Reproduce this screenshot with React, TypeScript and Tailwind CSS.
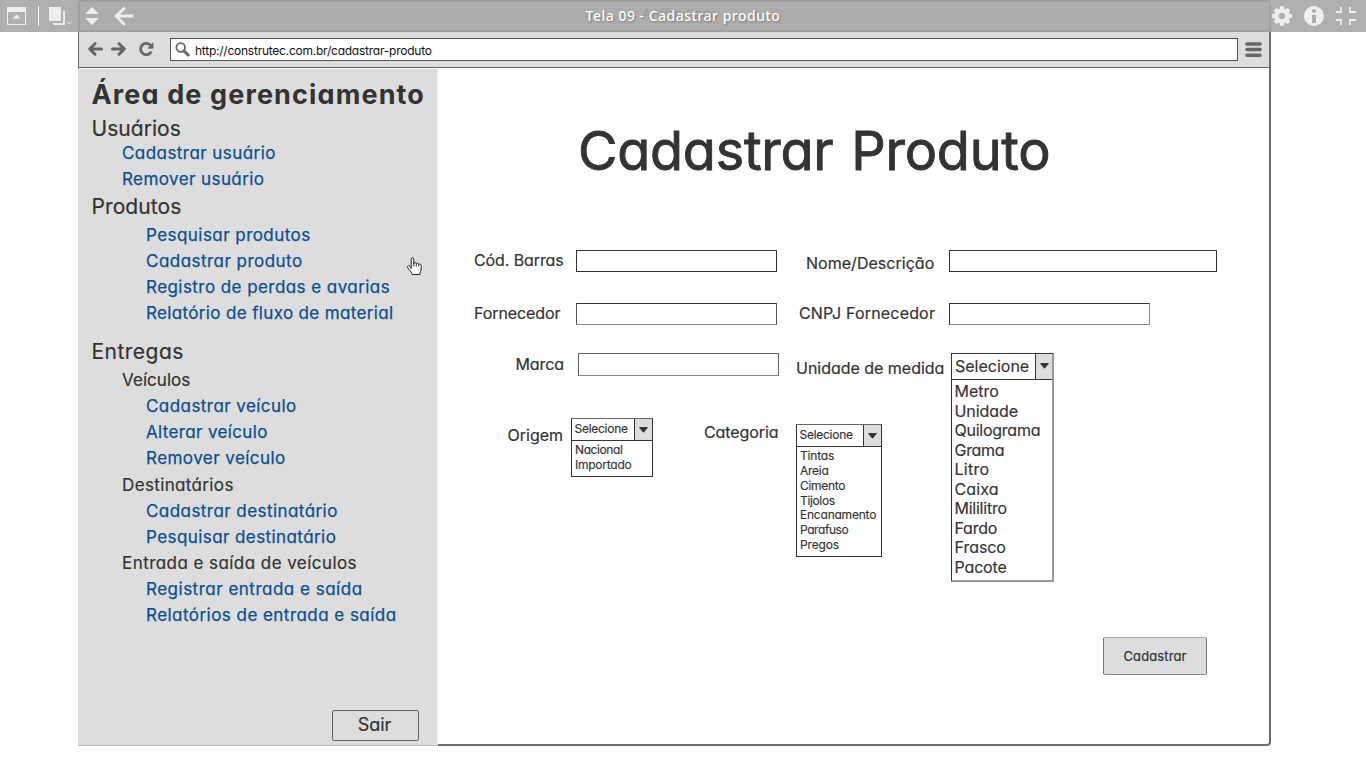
import type { ReactNode } from "react";

const UI = "font-['Inter','Liberation_Sans',sans-serif] [font-feature-settings:'cv11']";

type MenuItem = { text: string; className: string };

const userLinks: MenuItem[] = [
  { text: "Cadastrar usuário", className: "tracking-[0.44px]" },
  { text: "Remover usuário", className: "tracking-[0.42px]" },
];

const productLinks: MenuItem[] = [
  { text: "Pesquisar produtos", className: "tracking-[0.45px]" },
  { text: "Cadastrar produto", className: "tracking-[0.47px]" },
  { text: "Registro de perdas e avarias", className: "tracking-[0.44px]" },
  { text: "Relatório de fluxo de material", className: "tracking-[0.35px]" },
];

const deliveryGroups: { title: MenuItem; links: MenuItem[] }[] = [
  {
    title: { text: "Veículos", className: "tracking-[0.05px]" },
    links: [
      { text: "Cadastrar veículo", className: "tracking-[0.44px]" },
      { text: "Alterar veículo", className: "tracking-[0.35px]" },
      { text: "Remover veículo", className: "tracking-[0.45px]" },
    ],
  },
  {
    title: { text: "Destinatários", className: "mt-px tracking-[0.36px]" },
    links: [
      { text: "Cadastrar destinatário", className: "tracking-[0.44px]" },
      { text: "Pesquisar destinatário", className: "tracking-[0.42px]" },
    ],
  },
  {
    title: { text: "Entrada e saída de veículos", className: "tracking-[0.44px]" },
    links: [
      { text: "Registrar entrada e saída", className: "tracking-[0.5px]" },
      { text: "Relatórios de entrada e saída", className: "tracking-[0.46px]" },
    ],
  },
];

function SectionTitle({ className, children }: { className: string; children: ReactNode }) {
  return <h2 className={`pl-[12.500px] text-[21px] [-webkit-text-stroke:0.2px_#333] ${className}`}>{children}</h2>;
}

function MenuLinks({ items, indent }: { items: MenuItem[]; indent: string }) {
  return (
    <ul className={indent}>
      {items.map((item) => (
        <li key={item.text} className="h-[26px] leading-[26px]">
          <a className={`whitespace-nowrap text-[17px] text-[#0b4f93] [-webkit-text-stroke:0.25px_#0b4f93] ${item.className}`}>
            {item.text}
          </a>
        </li>
      ))}
    </ul>
  );
}

function Sidebar() {
  return (
    <aside className="relative z-10 -ml-px mt-px flex h-[677px] w-[360px] shrink-0 flex-col border-r border-b border-r-[#eeeeee] border-b-[#bbbbbb] bg-[#dddddd] pl-px pt-[7px]">
      <h1 className="h-9 whitespace-nowrap pl-[12.500px] pt-px text-[27px] font-bold leading-9 tracking-[1.13px]">
        Área de gerenciamento
      </h1>
      <SectionTitle className="mt-[5px] h-[23px] leading-6 tracking-[0.05px]">Usuários</SectionTitle>
      <MenuLinks items={userLinks} indent="pl-[43px]" />
      <SectionTitle className="h-7 pt-px leading-7 tracking-[0.1px]">Produtos</SectionTitle>
      <div className="pt-0.5">
        <MenuLinks items={productLinks} indent="pl-[67px]" />
      </div>
      <SectionTitle className="mt-2.5 h-[31px] leading-8 tracking-[0.47px]">Entregas</SectionTitle>
      {deliveryGroups.map((group) => (
        <section key={group.title.text}>
          <h3
            className={`h-[26px] pl-[43px] text-[17px] leading-[26px] [-webkit-text-stroke:0.2px_#333] ${group.title.className}`}
          >
            {group.title.text}
          </h3>
          <MenuLinks items={group.links} indent="pl-[67px]" />
        </section>
      ))}
      <button className="mb-1 mr-[18px] mt-auto h-[31px] w-[87px] self-end rounded-[2px] border border-[#666] pb-0.5 pr-0.5 text-[18px] leading-none [-webkit-text-stroke:0.2px_#333]">
        Sair
      </button>
      <svg className="absolute left-[328px] top-[188px]" width="17" height="19" viewBox="0 0 17 19">
        <path
          d="M5.2 11.5V2.2c0-1.8 2.6-1.8 2.6 0v4.2c.5-1.1 2.3-.9 2.5.4.6-.9 2.1-.6 2.4.6.9-.7 2.4-.1 2.4 1.3v3.4c0 2-1.3 3-1.3 5.4H6.2c-.3-2-3-4.700-4.500-6.800-1-1.600 1-2.700 2.200-1.300z"
          fill="#fff"
          stroke="#222"
          strokeWidth="1"
          strokeLinejoin="round"
        />
        <path d="M7.800 6v3.500M10.300 7v2.500M12.700 7.500v2" stroke="#222" strokeWidth="0.900" />
      </svg>
    </aside>
  );
}

function Label({ className, children }: { className: string; children: ReactNode }) {
  return (
    <span className={`shrink-0 whitespace-nowrap text-base leading-6 [-webkit-text-stroke:0.2px_#333] ${className}`}>
      {children}
    </span>
  );
}

function Dropdown({
  large = false,
  width,
  listHeight,
  options,
}: {
  large?: boolean;
  width: string;
  listHeight: string;
  options: MenuItem[];
}) {
  return (
    <div
      className={`shrink-0 border border-[#333] bg-white ${width} ${
        large ? "border-r-2 border-b-2 border-r-[#999] border-b-[#999] text-base" : "border-t-[#666] text-[12px]"
      }`}
    >
      <div className={`flex border-b border-[#333] ${large ? "h-[26px]" : "h-[22px]"}`}>
        <span
          className={`flex-1 [-webkit-text-stroke:0.15px_#333] ${
            large ? "pl-[3px] leading-6" : "pl-[2.500px] leading-5 tracking-[-0.27px]"
          }`}
        >
          Selecione
        </span>
        <span
          className={`flex justify-center border-l border-[#333] bg-[#dddddd] ${large ? "w-[17px] pt-[9px]" : "w-[18px] pt-2"}`}
        >
          <svg width="9" height="6" viewBox="0 0 9 6">
            <path d="M.6.600h7.800L4.500 5.200z" fill="#333" stroke="#333" strokeLinejoin="round" />
          </svg>
        </span>
      </div>
      <ul className={`pt-0.5 [-webkit-text-stroke:0.15px_#333] ${large ? "pl-[2.500px]" : "pl-[3px]"} ${listHeight}`}>
        {options.map((o) => (
          <li key={o.text} className={`${large ? "h-[19.55px] leading-[19.55px]" : "h-[14.85px] leading-[14.85px]"} ${o.className}`}>
            {o.text}
          </li>
        ))}
      </ul>
    </div>
  );
}

const origins: MenuItem[] = [
  { text: "Nacional", className: "tracking-[-0.4px]" },
  { text: "Importado", className: "tracking-[-0.25px]" },
];

const categories: MenuItem[] = [
  { text: "Tintas", className: "tracking-[-0.18px]" },
  { text: "Areia", className: "tracking-[-0.28px]" },
  { text: "Cimento", className: "tracking-[-0.3px]" },
  { text: "Tijolos", className: "tracking-[-0.35px]" },
  { text: "Encanamento", className: "tracking-[-0.22px]" },
  { text: "Parafuso", className: "tracking-[-0.43px]" },
  { text: "Pregos", className: "tracking-[-0.15px]" },
];

const units: MenuItem[] = [
  { text: "Metro", className: "tracking-[0px]" },
  { text: "Unidade", className: "tracking-[-0.05px]" },
  { text: "Quilograma", className: "tracking-[-0.25px]" },
  { text: "Grama", className: "tracking-[-0.3px]" },
  { text: "Litro", className: "tracking-[0.3px]" },
  { text: "Caixa", className: "tracking-[0.15px]" },
  { text: "Mililitro", className: "tracking-[-0.24px]" },
  { text: "Fardo", className: "tracking-[-0.2px]" },
  { text: "Frasco", className: "tracking-[-0.05px]" },
  { text: "Pacote", className: "tracking-[-0.15px]" },
];

function ProductForm() {
  return (
    <main className="flex min-w-0 flex-1 flex-col">
      <h1 className="mt-[52px] h-[62px] whitespace-nowrap pl-[140px] text-[54px] leading-[62px] tracking-[-0.25px] [word-spacing:3px] [-webkit-text-stroke:0.9px_#333] [stroke-linejoin:round]">
        Cadastrar Produto
      </h1>
      <div className="mt-[67px] flex h-[388px]">
        <div className="flex w-[344px] shrink-0 flex-col pl-9">
          <div className="flex h-[23px]">
            <Label className="-mt-px w-[102px] tracking-[-0.1px]">Cód. Barras</Label>
            <input className="mt-px h-[22px] w-[201px] border border-[#333] bg-white" />
          </div>
          <div className="mt-[29px] flex">
            <Label className="w-[102px] tracking-[-0.1px]">Fornecedor</Label>
            <input className="mt-0.5 h-[22px] w-[201px] border border-[#555] border-t-[#333] border-b-[#888] bg-white" />
          </div>
          <div className="mt-7 flex">
            <Label className="-mt-px w-[104px] pl-[41.500px] tracking-[-0.1px]">Marca</Label>
            <input className="h-[23px] w-[201px] border border-[#666] border-b-[#888] bg-white" />
          </div>
          <div className="mt-[42px] flex items-start">
            <Label className="mt-[5px] w-[97px] pl-[33.500px]">Origem</Label>
            <Dropdown width="w-[82px]" listHeight="h-[35px]" options={origins} />
            <Label className="ml-[51px] mt-0.5 tracking-[-0.08px]">Categoria</Label>
          </div>
        </div>
        <div className="flex w-[167px] shrink-0 flex-col">
          <Label className="mt-0.5 pl-6 tracking-[0.03px]">Nome/Descrição</Label>
          <Label className="mt-[26px] pl-[17px] tracking-[0.18px]">CNPJ Fornecedor</Label>
          <Label className="mt-[31px] pl-[14px] tracking-[-0.02px]">Unidade de medida</Label>
          <div className="mt-11 flex pl-[14px]">
            <Dropdown width="w-[86px]" listHeight="h-[109px]" options={categories} />
          </div>
        </div>
        <div className="flex flex-1 flex-col items-start">
          <input className="mt-px h-[22px] w-[268px] border border-[#333] bg-white" />
          <input className="mt-[31px] h-[22px] w-[201px] border border-[#333] border-r-[#888] border-b-[#888] bg-white" />
          <div className="ml-0.5 mt-7">
            <Dropdown large width="w-[103px]" listHeight="h-[200px]" options={units} />
          </div>
        </div>
      </div>
      <div className="flex justify-end pr-[62px]">
        <button className="h-[38px] w-[104px] rounded-[2px] border border-[#777] border-t-[#aaa] border-b-[#888] bg-[#dddddd] pt-px text-[13px] tracking-[0.11px] [-webkit-text-stroke:0.2px_#333]">
          Cadastrar
        </button>
      </div>
    </main>
  );
}

function AddressBar() {
  return (
    <div className="flex h-9 items-start border-b border-[#666] bg-[#dddddd] pl-2 pt-1.5">
      <svg className="mt-[3px]" width="68" height="15" viewBox="0 0 68 15" fill="none" stroke="#666" strokeLinecap="round" strokeLinejoin="round">
        <path d="M3 8H14.500M8 2.700 2.700 8 8 13.300" strokeWidth="3" />
        <path d="M37 8H25.500M32 2.700l5.300 5.300-5.300 5.300" strokeWidth="3" />
        <path d="M64.300 10.700A5.700 5.700 0 1 1 63.800 4.500" strokeWidth="2.800" strokeLinecap="butt" />
        <path d="M66.100 2v5.300h-5z" fill="#666" strokeWidth="0.600" />
      </svg>
      <div className="ml-[15px] flex h-[23px] w-[1068px] items-center border border-[#555] bg-white pl-1">
        <svg className="-mt-px" width="15" height="15" viewBox="0 0 15 15" fill="none" stroke="#666">
          <circle cx="5.700" cy="5.500" r="4.300" strokeWidth="1.800" />
          <path d="M9 9l4.200 4" strokeWidth="3" strokeLinecap="round" />
        </svg>
        <span className="ml-[5px] mt-0.5 text-[12px] leading-none tracking-[-0.24px] text-[#111]">
          http://construtec.com.br/cadastrar-produto
        </span>
      </div>
      <svg className="ml-[7px] mt-1" width="17" height="16" viewBox="0 0 17 16" stroke="#666" strokeWidth="3.600" strokeLinecap="round">
        <path d="M2 2h13M2 7.500h13M2 13.200h13" />
      </svg>
    </div>
  );
}

function PresentationBar() {
  return (
    <header className="flex h-8 w-full bg-[#b0b0b0]">
      <div className="w-[78px] shrink-0">
        <svg width="78" height="32" viewBox="0 0 78 32" fill="#eee">
          <path d="M7 7h19v18H7zM8 12v12h17V12z" fillRule="evenodd" />
          <path d="M12.500 18.500h8L16.500 14.500z" />
          <path d="M38 6h1v20h-1z" fill="#fff" />
          <path d="M49 7h12v14H49zM63 11h2v14H53v-2h10z" />
          <path d="M67 21.500l2.500 2.500 2.500-2.500" fill="none" stroke="#eee" />
        </svg>
      </div>
      <div className="relative flex w-[1193px] shrink-0 items-center justify-center rounded-t-[4px] border-2 border-[#a1a1a1] bg-[#adadad]">
        <span className="absolute left-[562px] top-0.5 text-[13px] leading-5 text-[#9c9c9c]">A Web Page</span>
        <svg className="absolute left-1 top-[-2px]" width="56" height="32" viewBox="0 0 56 32" fill="#eee">
          <path d="M1 14h14L8 7zM1 18h14l-7 7z" />
          <path d="M48 16H32M40 8.500L32 16l8 8" fill="none" stroke="#eee" strokeWidth="2.800" strokeLinecap="round" strokeLinejoin="round" />
        </svg>
        <span className="relative ml-[17px] whitespace-nowrap font-['Noto_Sans',sans-serif] text-[14px] font-medium leading-5 tracking-[0.5px] text-white [text-shadow:1px_1px_2px_#777]">
          Tela 09 - Cadastrar produto
        </span>
      </div>
      <svg width="95" height="32" viewBox="0 0 95 32" fill="#eee">
        <circle cx="11" cy="16" r="5.500" fill="none" stroke="#eee" strokeWidth="4.600" />
        <path
          d="M11 6.200v3M11 22.800v3M1.200 16h3M17.800 16h3M4.100 9.100l2 2M15.900 20.900l2 2M4.100 22.900l2-2M15.900 11.100l2-2"
          stroke="#eee"
          strokeWidth="4"
        />
        <circle cx="43" cy="16" r="10" />
        <path d="M41 15h4v8h-4z" fill="#adadad" />
        <circle cx="43" cy="11" r="2" fill="#adadad" />
        <path d="M65 12h5V7M85 12h-6V7M65 20h5v5M85 20h-6v5" fill="none" stroke="#eee" strokeWidth="1.800" />
      </svg>
    </header>
  );
}

export default function App() {
  return (
    <div className={`h-[768px] w-[1366px] overflow-hidden bg-white text-[#333] ${UI}`}>
      <PresentationBar />
      <div className="ml-[78px] flex h-[714px] w-[1193px] flex-col rounded-b-[4px] border-b-2 border-l border-r-2 border-[#6e6e6e]">
        <AddressBar />
        <div className="flex h-[676px] flex-1">
          <Sidebar />
          <ProductForm />
        </div>
      </div>
    </div>
  );
}
